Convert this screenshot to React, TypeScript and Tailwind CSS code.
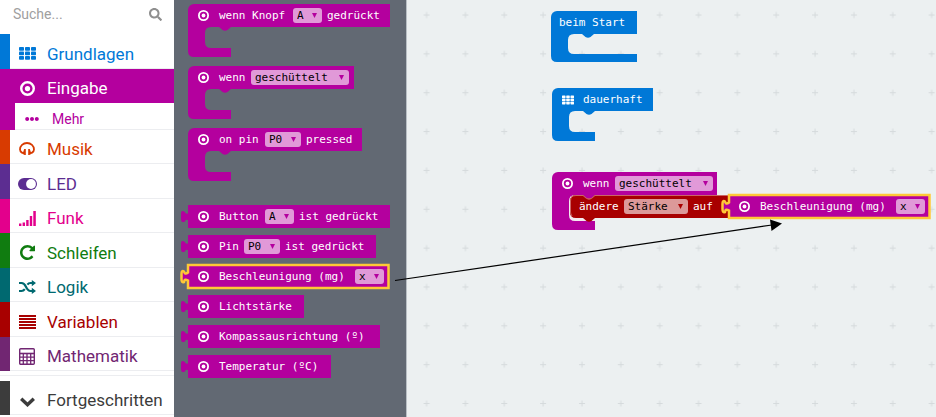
import type { ReactNode } from "react";
import { FaEllipsisH, FaSearch } from "react-icons/fa";

function TargetIcon({ className = "" }: { className?: string }) {
  return (
    <svg viewBox="0 0 16 16" className={`shrink-0 ${className}`} fill="none" aria-hidden="true">
      <circle cx="8" cy="8" r="6.7" stroke="currentColor" strokeWidth="2.6" />
      <circle cx="8" cy="8" r="2.8" fill="currentColor" />
    </svg>
  );
}

function GridIcon({ className = "" }: { className?: string }) {
  return (
    <svg viewBox="0 0 17 13" className={`shrink-0 ${className}`} fill="currentColor" aria-hidden="true">
      {[0, 4.5, 9].map((y) =>
        [0, 6, 12].map((x) => <rect key={`${x}-${y}`} x={x} y={y} width="5" height="3.7" rx="0.8" />),
      )}
    </svg>
  );
}

function HeadphoneIcon() {
  return (
    <svg viewBox="0 0 16 14" className="h-[14px] w-4" aria-hidden="true">
      <path
        d="M3 10.8C1.600 9.800 1 8.800 1 7.500C1 3.700 4.100 1 8 1S15 3.700 15 7.500C15 8.800 14.400 9.800 13 10.800"
        fill="none"
        stroke="currentColor"
        strokeWidth="1.800"
      />
      <path d="M5.200 7H6.800V13H5.600L2 11V9.800L4.200 10ZM10.800 7H9.200V13H10.400L14 11V9.800L11.800 10Z" fill="currentColor" />
    </svg>
  );
}

function ToggleIcon() {
  return (
    <svg viewBox="0 0 19 12" className="h-3 w-[19px]" aria-hidden="true">
      <rect x="0" y="0" width="19" height="12" rx="6" fill="currentColor" />
      <circle cx="13" cy="6" r="4.900" fill="white" />
    </svg>
  );
}

function SignalIcon() {
  return (
    <svg viewBox="0 0 17 15" className="h-[15px] w-[17px]" fill="currentColor" aria-hidden="true">
      <rect x="0" y="12.500" width="2.400" height="2.500" />
      <rect x="3.600" y="11.500" width="2.400" height="3.500" />
      <rect x="7.200" y="9" width="2.400" height="6" />
      <rect x="10.800" y="5" width="2.400" height="10" />
      <rect x="14.300" y="0" width="2.500" height="15" />
    </svg>
  );
}

function RepeatIcon() {
  return (
    <svg viewBox="128 128 1536 1536" className="size-[15px]" fill="currentColor" aria-hidden="true">
      <path d="M1664 256v448q0 26-19 45t-45 19h-448q-42 0-59-40-17-39 14-69l138-138Q1097 384 896 384q-104 0-198.500 40.500T534 534 424.500 697.500 384 896t40.500 198.500T534 1258t163.500 109.500T896 1408q119 0 225-52t179-147q7-10 23-12 15 0 25 9l137 138q9 8 9.500 20.500t-7.500 22.500q-109 132-264 204.500T896 1664q-156 0-298-61t-245-164-164-245-61-298 61-298 164-245 245-164 298-61q147 0 284.500 55.500T1425 340l130-129q29-31 70-14 39 17 39 59z" />
    </svg>
  );
}

function ShuffleIcon() {
  return (
    <svg viewBox="0 0 17 14" className="h-[14px] w-[17px]" aria-hidden="true">
      <path
        d="M0 3h2.500c2 0 3.200 1.200 4.300 3.500S9 11 11.500 11H14M0 11h2.500c1.500 0 2.500-.7 3.300-1.800M8.400 4.600C9.200 3.500 10.200 3 11.500 3H14"
        fill="none"
        stroke="currentColor"
        strokeWidth="2.200"
      />
      <path d="M12.800 0l4.200 3-4.200 3.200zM12.800 7.800l4.200 3.200-4.200 3z" fill="currentColor" />
    </svg>
  );
}

function LinesIcon() {
  return (
    <svg viewBox="0 0 17 14" className="h-[14px] w-[17px]" fill="currentColor" aria-hidden="true">
      {[0, 3, 6, 9, 12].map((y) => (
        <rect key={y} x="0" y={y} width="17" height="2" />
      ))}
    </svg>
  );
}

function CalculatorIcon() {
  return (
    <svg viewBox="0 0 16 17" className="h-[17px] w-4" fill="none" stroke="currentColor" aria-hidden="true">
      <rect x="0.700" y="0.700" width="14.600" height="15.600" rx="1" strokeWidth="1.400" />
      <path d="M1 5.500h14" strokeWidth="1.600" />
      <path d="M1 9.200h14M1 12.700h14M4.300 6v10M8 6v10M11.700 6v10" strokeWidth="1.300" />
    </svg>
  );
}

function ChevronIcon() {
  return (
    <svg viewBox="0 0 15 10" className="mt-1 h-[10px] w-[15px]" fill="none" aria-hidden="true">
      <path d="M1.200 1.700L7.500 7.700L13.800 1.700" stroke="currentColor" strokeWidth="3.400" />
    </svg>
  );
}

type CategoryProps = { icon: ReactNode; name: string; strip: string; text: string; height: string };

function Category({ icon, name, strip, text, height }: CategoryProps) {
  return (
    <li>
      <button type="button" className={`flex w-full items-stretch text-left ${height}`}>
        <span className={`w-[10px] shrink-0 ${strip}`} />
        <span className={`flex flex-1 items-center border-b border-[#ecedf0] pt-[5px] text-[17px] leading-6 ${text}`}>
          <span className="flex w-[34px] shrink-0 justify-center">{icon}</span>
          <span className="ml-[3px]">{name}</span>
        </span>
      </button>
    </li>
  );
}

const categories: CategoryProps[] = [
  { icon: <HeadphoneIcon />, name: "Musik", strip: "bg-[#d83b01]", text: "text-[#d83b01]", height: "h-[34px]" },
  { icon: <ToggleIcon />, name: "LED", strip: "bg-[#5c2d91]", text: "text-[#5c2d91]", height: "h-[35px]" },
  { icon: <SignalIcon />, name: "Funk", strip: "bg-[#e3008c]", text: "text-[#e3008c]", height: "h-[34px]" },
  { icon: <RepeatIcon />, name: "Schleifen", strip: "bg-[#107c10]", text: "text-[#107c10]", height: "h-[35px]" },
  { icon: <ShuffleIcon />, name: "Logik", strip: "bg-[#006970]", text: "text-[#006970]", height: "h-[34px]" },
  { icon: <LinesIcon />, name: "Variablen", strip: "bg-[#a80000]", text: "text-[#a80000]", height: "h-[35px]" },
  { icon: <CalculatorIcon />, name: "Mathematik", strip: "bg-[#712672]", text: "text-[#712672]", height: "h-[34px]" },
];

function Sidebar() {
  return (
    <nav className="w-[174px] shrink-0 bg-white font-['Roboto',sans-serif]">
      <div className="flex h-[34px] items-center pr-3 pb-[6px] pl-[13px] text-[#8f8f8f]">
        <input
          type="search"
          aria-label="Suche"
          placeholder="Suche..."
          className="w-full min-w-0 bg-transparent text-[14px] leading-5 outline-none placeholder:text-[#a0a0a0]"
        />
        <FaSearch className="size-[13px] shrink-0" aria-hidden="true" />
      </div>
      <ul>
        <Category
          icon={<GridIcon className="h-[13px] w-[17px]" />}
          name="Grundlagen"
          strip="bg-[#0078d7]"
          text="text-[#0078d7]"
          height="h-[35px]"
        />
        <li>
          <button type="button" className="flex h-[34px] w-full items-center bg-[#b4009e] pt-[4px] pl-[10px] text-left text-[17px] leading-6 text-white">
            <span className="flex w-[34px] shrink-0 justify-center">
              <TargetIcon className="size-[15px]" />
            </span>
            <span className="ml-[3px]">Eingabe</span>
          </button>
          <button type="button" className="flex h-[27px] w-full items-stretch text-left text-[#b4009e]">
            <span className="w-[15px] shrink-0 bg-[#b4009e]" />
            <span className="flex flex-1 items-center border-b border-[#ecedf0] pt-[5px] pl-[10px] text-[14px] leading-5">
              <FaEllipsisH className="size-[14px]" aria-hidden="true" />
              <span className="ml-[13px]">Mehr</span>
            </span>
          </button>
        </li>
        {categories.map((c) => (
          <Category key={c.name} {...c} />
        ))}
      </ul>
      <div className="mt-1 border-t border-[#ecedf0] pt-[5px]">
        <ul>
          <Category
            icon={<ChevronIcon />}
            name="Fortgeschritten"
            strip="bg-[#3c3c3c]"
            text="text-[#3c3c3c]"
            height="h-[34px]"
          />
        </ul>
      </div>
    </nav>
  );
}

type FieldProps = { label: string; value: string; width: string; tone?: string; arrow?: string };

function Field({ label, value, width, tone = "bg-[#e199d8]", arrow = "text-[#b4009e]" }: FieldProps) {
  return (
    <span className={`relative mr-[5px] block h-[15px] shrink-0 rounded-[3px] ${tone} ${width}`}>
      <select
        aria-label={label}
        defaultValue={value}
        className="block h-full w-full appearance-none bg-transparent pl-1 leading-[15px] text-black outline-none"
      >
        <option>{value}</option>
      </select>
      <svg viewBox="0 0 5 5" className={`pointer-events-none absolute top-[5px] right-[5px] size-[5px] ${arrow}`} aria-hidden="true">
        <path d="M0 0h5L2.500 5z" fill="currentColor" />
      </svg>
    </span>
  );
}

function Word({ children, width = "" }: { children: ReactNode; width?: string }) {
  return <span className={`shrink-0 whitespace-pre ${width}`}>{children}</span>;
}

const rowBase =
  "relative flex h-[23px] items-center font-['DejaVu_Sans_Mono',monospace] text-[11px] leading-[15px] text-white";

function BlockIcon() {
  return <TargetIcon className="mr-[10px] size-[11px]" />;
}

/* Event block: header bar with an empty C-shaped slot hanging under it. */
function EventBlock({ width, tone, fill, children }: { width: string; tone: string; fill: string; children: ReactNode }) {
  return (
    <div className={width}>
      <div className={`${rowBase} rounded-tl-[6px] pl-[10px] ${tone}`}>{children}</div>
      <svg viewBox="0 0 43 30" className={`block h-[30px] w-[43px] ${fill}`} aria-hidden="true">
        <path d="M0 0H43L39.500 3Q37 4.600 34.500 3L31 0H23Q17 0 17 6V15Q17 21 23 21H43V30H6Q0 30 0 24Z" />
      </svg>
    </div>
  );
}

/* Value block: bar with a puzzle tab on its left edge. */
function ValueBlock({ width, children }: { width: string; children: ReactNode }) {
  return (
    <div className={`${rowBase} bg-[#b4009e] pl-[10px] ${width}`}>
      <svg viewBox="0 0 8 14" className="absolute top-[5px] -left-[7px] h-[14px] w-2 fill-[#b4009e]" aria-hidden="true">
        <path d="M8 3C5.500 4.500 4.500 3.500 4 2Q0 -1 0 4V9Q0 13.500 4 11.500C4.500 9.500 5.500 9 8 10.500Z" />
      </svg>
      {children}
    </div>
  );
}

function AccelerationBlock() {
  return (
    <div className={`${rowBase} w-[201px] pl-[10px]`}>
      <svg viewBox="-9 -2 212 27" className="absolute -top-[2px] -left-[9px] h-[27px] w-[212px]" aria-hidden="true">
        <path
          d="M0 0H200.500V23H0V15.500C-2.500 14-3.500 14.500-4 17Q-6.500 18-6.500 14V9Q-6.500 5-4 6.500C-3.500 8.500-2.500 9.500 0 7.500Z"
          fill="#b4009e"
          stroke="#ffc836"
          strokeWidth="2.500"
        />
      </svg>
      <span className="relative flex items-center">
        <BlockIcon />
        <Word width="w-[136px]">Beschleunigung (mg)</Word>
        <Field label="Achse" value="x" width="w-[29px]" />
      </span>
    </div>
  );
}

const magenta = { tone: "bg-[#b4009e]", fill: "fill-[#b4009e]" };
const blue = { tone: "bg-[#0078d7]", fill: "fill-[#0078d7]" };

function Flyout() {
  return (
    <section aria-label="Eingabe" className="w-[233px] shrink-0 border-r border-[#b9bfc5] bg-[#626973] pt-1 pl-[14px]">
      <div className="flex flex-col gap-[9px]">
        <EventBlock width="w-[202px]" {...magenta}>
          <BlockIcon />
          <Word width="w-[74px]">wenn Knopf</Word>
          <Field label="Knopf" value="A" width="w-[29px]" />
          <Word>gedrückt</Word>
        </EventBlock>
        <EventBlock width="w-[166px]" {...magenta}>
          <BlockIcon />
          <Word width="w-[32px]">wenn</Word>
          <Field label="Geste" value="geschüttelt" width="w-[98px]" />
        </EventBlock>
        <EventBlock width="w-[174px]" {...magenta}>
          <BlockIcon />
          <Word width="w-[46px]">on pin</Word>
          <Field label="Pin" value="P0" width="w-[36px]" />
          <Word>pressed</Word>
        </EventBlock>
      </div>
      <div className="mt-6 flex flex-col gap-[7px]">
        <ValueBlock width="w-[202px]">
          <BlockIcon />
          <Word width="w-[46px]">Button</Word>
          <Field label="Button" value="A" width="w-[29px]" />
          <Word>ist gedrückt</Word>
        </ValueBlock>
        <ValueBlock width="w-[188px]">
          <BlockIcon />
          <Word width="w-[25px]">Pin</Word>
          <Field label="Pin gedrückt" value="P0" width="w-[36px]" />
          <Word>ist gedrückt</Word>
        </ValueBlock>
        <AccelerationBlock />
        <ValueBlock width="w-[116px]">
          <BlockIcon />
          <Word>Lichtstärke</Word>
        </ValueBlock>
        <ValueBlock width="w-[192px]">
          <BlockIcon />
          <Word>Kompassausrichtung (º)</Word>
        </ValueBlock>
        <ValueBlock width="w-[143px]">
          <BlockIcon />
          <Word>Temperatur (ºC)</Word>
        </ValueBlock>
      </div>
    </section>
  );
}

function Workspace() {
  return (
    <main className="relative flex-1 overflow-hidden bg-[#ecf0f1]">
      <svg className="absolute inset-0 h-full w-full" aria-hidden="true">
        <defs>
          <pattern id="crosses" x="-0.400" y="-4.400" width="38.850" height="38.850" patternUnits="userSpaceOnUse">
            <path d="M17 19.400h6M20 16.400v6" stroke="#d5dadc" strokeWidth="1" />
          </pattern>
        </defs>
        <rect width="100%" height="100%" fill="url(#crosses)" />
      </svg>

      <div className="absolute top-[11px] left-[144px] w-[86px]">
        <div className={`${rowBase} rounded-tl-[6px] bg-[#0078d7] pl-2`}>
          <Word>beim Start</Word>
        </div>
        <svg viewBox="0 0 86 28" className="block h-7 w-[86px] fill-[#0078d7]" aria-hidden="true">
          <path d="M0 -1H86V0H43L39.500 3Q37 4.600 34.500 3L31 0H23Q17 0 17 6V14Q17 20 23 20H86V28H6Q0 28 0 22Z" />
        </svg>
      </div>

      <div className="absolute top-[88px] left-[145px]">
        <EventBlock width="w-[101px]" {...blue}>
          <GridIcon className="mr-[9px] h-[10px] w-[12px]" />
          <Word>dauerhaft</Word>
        </EventBlock>
      </div>

      <div className="absolute top-[172px] left-[145px]">
        <div className={`${rowBase} w-[165px] rounded-tl-[6px] bg-[#b4009e] pl-[10px]`}>
          <BlockIcon />
          <Word width="w-[32px]">wenn</Word>
          <Field label="Ereignis" value="geschüttelt" width="w-[98px]" />
        </div>
        <svg viewBox="0 0 43 35" className="block h-[35px] w-[43px] fill-[#b4009e]" aria-hidden="true">
          <path d="M0 0H43V26V35H6Q0 35 0 29Z" />
          <path d="M43 0L39.500 3Q37 4.600 34.500 3L31 0H23Q17 0 17 6V20Q17 26 23 26H43Z" fill="#f4e9ee" />
        </svg>
      </div>

      <div className="absolute top-[195px] left-[163px]">
        <div className={`${rowBase} w-[160px] pl-[9px]`}>
          <svg viewBox="0 0 160 27" className="absolute top-0 left-0 h-[27px] w-[160px]" aria-hidden="true">
            <path d="M6 0H13L16.500 3Q19 4.600 21.500 3L25 0H160V23H25L21.500 26Q19 27.600 16.500 26L13 23H6Q0 23 0 17V6Q0 0 6 0Z" fill="#a80000" />
            <path d="M2 21Q.5 19 .5 17V6Q.5 .5 6 .5H13L16.500 3.500Q19 5 21.500 3.500L25 .5H160" fill="none" stroke="#cb6666" />
          </svg>
          <span className="relative flex items-center">
            <Word width="w-[45px]">ändere</Word>
            <Field label="Variable" value="Stärke" width="w-[64px]" tone="bg-[#dc9999]" arrow="text-[#a80000]" />
            <Word>auf</Word>
          </span>
        </div>
      </div>

      <div className="absolute top-[195px] left-[322px]">
        <AccelerationBlock />
      </div>
    </main>
  );
}

export default function App() {
  return (
    <div className="relative flex min-h-screen overflow-hidden">
      <Sidebar />
      <Flyout />
      <Workspace />
      <svg viewBox="0 0 390 70" className="pointer-events-none absolute top-[215px] left-[394px] h-[70px] w-[390px]" aria-hidden="true">
        <path d="M1 65.500L378 10" stroke="black" strokeWidth="1.200" />
        <path d="M388 8.500L376 4.500L377.500 16Z" fill="black" />
      </svg>
    </div>
  );
}
